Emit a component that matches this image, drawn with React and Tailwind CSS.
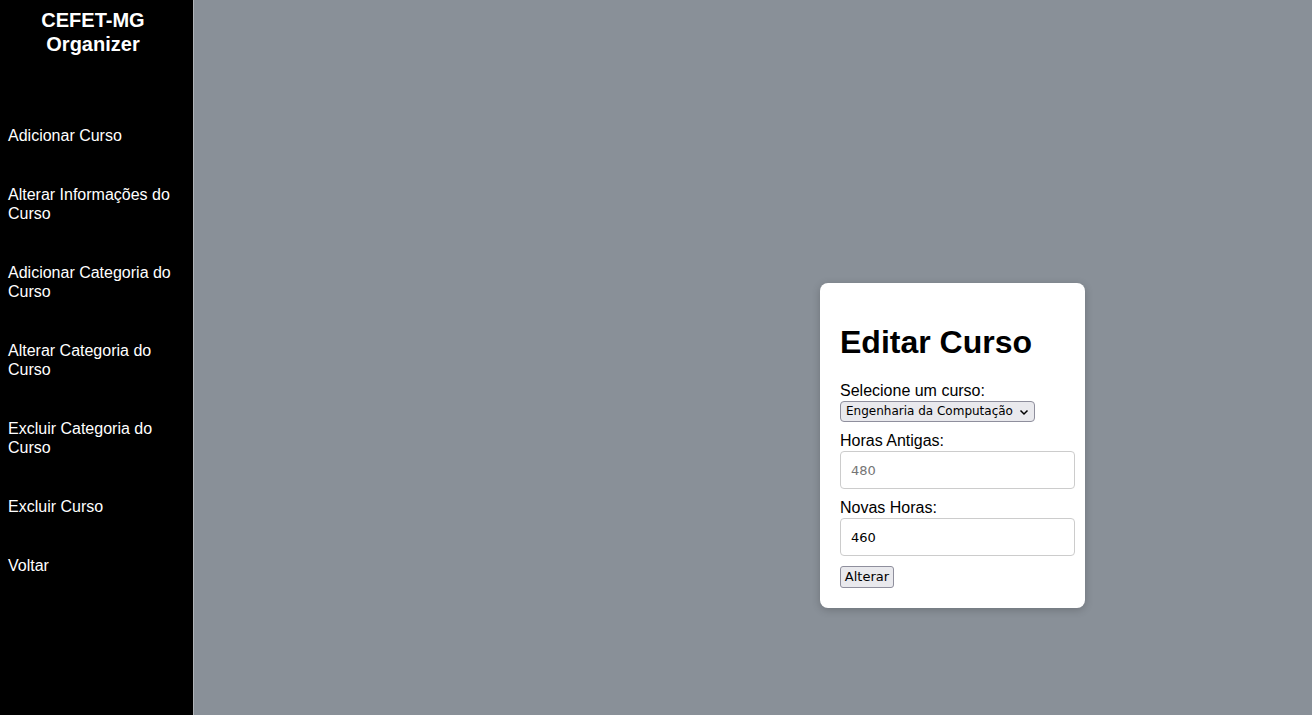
import React from "react";

const items = [
  "Adicionar Curso",
  "Alterar Informações do Curso",
  "Adicionar Categoria do Curso",
  "Alterar Categoria do Curso",
  "Excluir Categoria do Curso",
  "Excluir Curso",
  "Voltar",
];

export default function App() {
  return (
    <div className="flex h-[715px] w-[1312px] overflow-hidden bg-[#899098] font-['Liberation_Sans',Arial,sans-serif]">
      <aside className="w-[194px] shrink-0 h-full bg-black border-r border-[#b0b4b8] text-white">
        <div className="pt-[8px] pr-[7px] text-center text-[20px] font-bold leading-[24px]">
          CEFET-MG
          <br />
          Organizer
        </div>
        <ul className="mt-[50px] pl-[8px] pr-[8px]">
          {items.map((t) => (
            <li key={t} className="py-[20px] text-[16px] leading-[19px]">
              {t}
            </li>
          ))}
        </ul>
      </aside>
      <main className="flex-1 flex items-start">
        <div className="ml-[626px] mt-[283px] w-[265px] rounded-[8px] bg-white p-[20px] shadow-[0_2px_8px_rgba(0,0,0,0.2)]">
          <h1 className="mt-[21px] mb-[21px] text-[32px] font-bold leading-[37px] text-black">
            Editar Curso
          </h1>
          <div className="text-[16px] leading-[18px] text-black">Selecione um curso:</div>
          <div className="mt-[1px] flex h-[21px] w-[195px] items-center justify-between rounded-[4px] border border-[#8f8f9d] bg-[#e9e9ed] pl-[5px] pr-[5px] text-[12px] leading-[19px] text-black font-['DejaVu_Sans',sans-serif]">
            <span className="whitespace-nowrap">Engenharia da Computação</span>
            <svg
              width="10"
              height="8"
              viewBox="0 0 10 8"
              fill="none"
              stroke="black"
              strokeWidth="1.5"
            >
              <path d="M1.5 2.5 L5 6 L8.5 2.5" />
            </svg>
          </div>
          <div className="mt-[10px] text-[16px] leading-[18px] text-black">Horas Antigas:</div>
          <input
            className="mt-[1px] block h-[38px] w-[235px] rounded-[4px] border border-[#cccccc] px-[10px] text-[13px] text-black placeholder:text-[#757575] font-['DejaVu_Sans',sans-serif]"
            placeholder="480"
          />
          <div className="mt-[10px] text-[16px] leading-[18px] text-black">Novas Horas:</div>
          <input
            className="mt-[1px] block h-[38px] w-[235px] rounded-[4px] border border-[#cccccc] px-[10px] text-[13px] text-black font-['DejaVu_Sans',sans-serif]"
            defaultValue="460"
          />
          <button className="mt-[10px] block h-[22px] w-[54px] rounded-[3px] border border-[#8f8f9d] bg-[#e9e9ed] text-[13px] leading-[20px] text-black font-['DejaVu_Sans',sans-serif]">
            Alterar
          </button>
        </div>
      </main>
    </div>
  );
}
